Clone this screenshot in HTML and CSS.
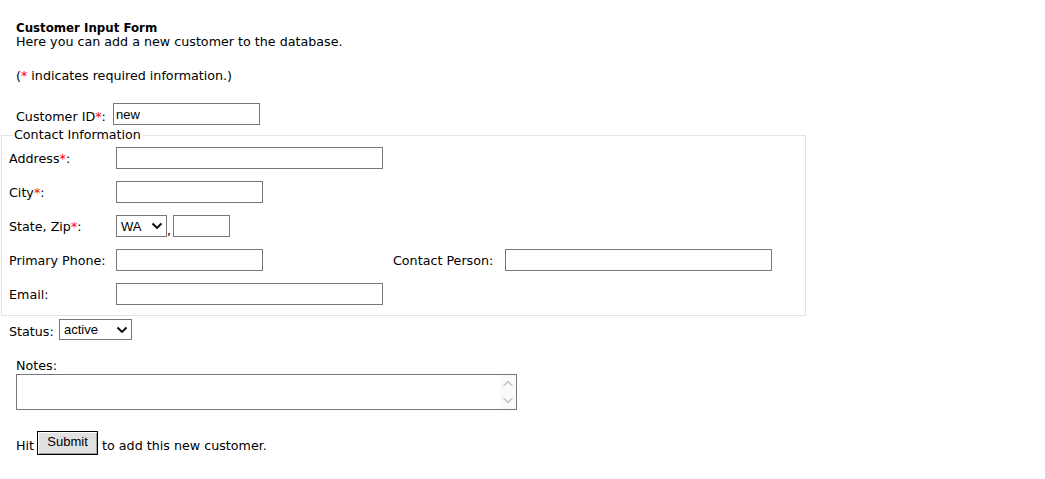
FILE: index.html
```html
<!DOCTYPE html>
<html>
<head>
<meta charset="utf-8">
<link rel="stylesheet" href="styles.css">
</head>
<body>
<div class="page">
  <div class="intro">
    <div class="title">Customer Input Form</div>
    <div class="line">Here you can add a new customer to the database.</div>
  </div>
  <div class="note">(<span class="req">*</span> indicates required information.)</div>
  <div class="idrow">
    <span class="lbl">Customer ID<span class="req">*</span>:</span>
    <input class="txt w147" type="text" value="new">
  </div>
  <fieldset class="contact">
    <legend>Contact Information</legend>
    <div class="row">
      <span class="flbl">Address<span class="req">*</span>:</span>
      <input class="txt w267" type="text">
    </div>
    <div class="row">
      <span class="flbl">City<span class="req">*</span>:</span>
      <input class="txt w147" type="text">
    </div>
    <div class="row">
      <span class="flbl">State, Zip<span class="req">*</span>:</span>
      <span class="sel w51">
        <select class="selbox"><option>WA</option></select>
        <svg class="chev" width="12" height="8" viewBox="0 0 12 8"><path d="M1.5 1.5 L6 6 L10.5 1.5" fill="none" stroke="#000" stroke-width="1.8"/></svg>
      </span><span class="comma">,</span><input class="txt w57" type="text">
    </div>
    <div class="row">
      <span class="flbl">Primary Phone:</span>
      <input class="txt w147" type="text">
      <span class="clbl">Contact Person:</span>
      <input class="txt w267" type="text">
    </div>
    <div class="row">
      <span class="flbl">Email:</span>
      <input class="txt w267" type="text">
    </div>
  </fieldset>
  <div class="statusrow">
    <span class="slbl">Status:</span>
    <span class="sel w73">
      <select class="selbox"><option>active</option></select>
      <svg class="chev" width="12" height="8" viewBox="0 0 12 8"><path d="M1.5 1.5 L6 6 L10.5 1.5" fill="none" stroke="#000" stroke-width="1.8"/></svg>
    </span>
  </div>
  <div class="notes">
    <div class="nlbl">Notes:</div>
    <div class="tawrap">
      <textarea class="ta"></textarea>
      <svg class="scroll" width="16" height="34" viewBox="0 0 16 34"><rect width="16" height="34" fill="#fafafa"/><path d="M3.5 11 L8 6.5 L12.5 11" fill="none" stroke="#c8c8c8" stroke-width="1.6"/><path d="M3.5 23 L8 27.5 L12.5 23" fill="none" stroke="#c8c8c8" stroke-width="1.6"/></svg>
    </div>
  </div>
  <div class="hitrow">
    <span>Hit</span>
    <button class="btn" type="button">Submit</button>
    <span>to add this new customer.</span>
  </div>
</div>
</body>
</html>
```

FILE: styles.css
```css
html, body {
  margin: 0;
  padding: 0;
  background: #fff;
}
body {
  font-family: "DejaVu Sans", Verdana, sans-serif;
  font-size: 12.7px;
  color: #000;
}
.page {
  padding-top: 21px;
}
.intro {
  padding-left: 16px;
  line-height: 14px;
}
.title {
  font-weight: bold;
  font-size: 11.8px;
}
.note {
  padding-left: 16px;
  margin-top: 20px;
  line-height: 14px;
}
.req {
  color: #f00;
}
.idrow {
  display: flex;
  align-items: center;
  margin-top: 20px;
  padding-left: 16px;
  height: 22px;
}
.idrow .lbl {
  width: 97px;
  padding-top: 4px;
}
.txt {
  box-sizing: border-box;
  height: 22px;
  border: 1px solid #767676;
  margin: 0;
  padding: 0 2px;
  font-family: "Liberation Sans", Arial, sans-serif;
  font-size: 13px;
  background: #fff;
  outline: none;
}
.w147 { width: 147px; }
.w267 { width: 267px; }
.w57 { width: 57px; }
.contact {
  box-sizing: border-box;
  width: 805px;
  margin: 3px 0 0 1px;
  padding: 5px 0 10px 7px;
  border: 1px solid #e3e3e3;
}
.contact legend {
  padding: 0 2px;
  margin-left: 3px;
  line-height: 14px;
}
.row {
  display: flex;
  align-items: center;
  height: 22px;
  margin-bottom: 12px;
}
.row:last-child {
  margin-bottom: 0;
}
.flbl {
  width: 107px;
  padding-top: 0;
}
.clbl {
  margin-left: 130px;
  width: 112px;
  padding-top: 0;
}
.sel {
  position: relative;
  display: inline-block;
  height: 22px;
}
.w51 { width: 51px; }
.w73 { width: 73px; }
.selbox {
  -webkit-appearance: none;
  appearance: none;
  box-sizing: border-box;
  width: 100%;
  height: 100%;
  margin: 0;
  border: 1px solid #767676;
  border-radius: 0;
  background: #fff;
  padding: 0 0 0 4px;
  font-family: "Liberation Sans", Arial, sans-serif;
  font-size: 13px;
  color: #000;
  outline: none;
}
.chev {
  position: absolute;
  right: 4px;
  top: 7px;
  pointer-events: none;
}
.comma {
  width: 6px;
  align-self: flex-end;
  padding-bottom: 1px;
  line-height: 10px;
}
.statusrow {
  display: flex;
  align-items: center;
  margin-top: 3px;
  padding-left: 9px;
  height: 21px;
}
.statusrow .sel {
  height: 21px;
}
.slbl {
  width: 50px;
  padding-top: 4px;
}
.notes {
  padding-left: 16px;
  margin-top: 19px;
}
.nlbl {
  line-height: 14px;
}
.tawrap {
  position: relative;
  width: 501px;
  height: 36px;
  margin-top: 1px;
}
.ta {
  box-sizing: border-box;
  display: block;
  width: 501px;
  height: 36px;
  margin: 0;
  border: 1px solid #767676;
  resize: none;
  overflow: hidden;
  outline: none;
}
.scroll {
  position: absolute;
  right: 1px;
  top: 1px;
}
.hitrow {
  display: flex;
  align-items: center;
  padding-left: 16px;
  margin-top: 21px;
  height: 24px;
}
.btn {
  box-sizing: border-box;
  height: 24px;
  width: 61px;
  margin: 0 4px 0 3px;
  padding: 0 0 3px;
  border: 1px solid #000;
  box-shadow: inset 1px 1px 0 #fff, inset -1px -1px 0 #a0a0a0;
  background: #e1e1e1;
  font-family: "Liberation Sans", Arial, sans-serif;
  font-size: 13px;
  color: #000;
  border-radius: 0;
}
.hitrow span {
  padding-top: 5px;
}
```
